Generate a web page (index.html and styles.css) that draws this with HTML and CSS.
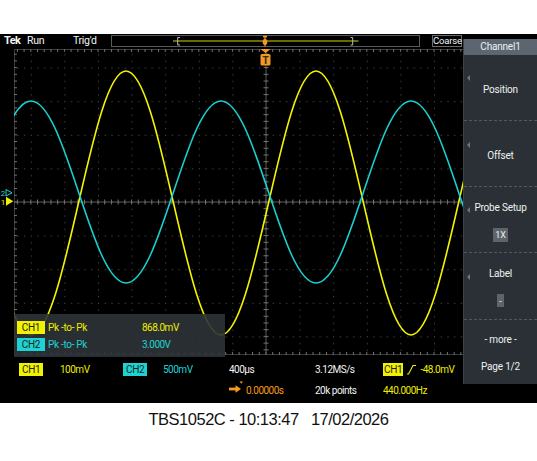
FILE: index.html
```html
<!DOCTYPE html>
<html>
<head>
<meta charset="utf-8">
<link rel="stylesheet" href="styles.css">
</head>
<body>
<div class="top-space"></div>
<div class="scope">
  <div class="topbar">
    <span class="tek">Tek</span>
    <span class="run">Run</span>
    <span class="trig">Trig'd</span>
    <svg class="recview" width="309" height="12" viewBox="0 0 309 12">
      <rect x="0.5" y="0.5" width="308" height="11" fill="none" stroke="#5a5a5a"/>
      <line x1="62" y1="6" x2="247.5" y2="6" stroke="#d6d600" stroke-width="1"/>
      <path d="M69 2.5 H66.7 V10 H69" fill="none" stroke="#b8b8b8" stroke-width="1"/>
      <path d="M239.5 2.5 H241.7 V10 H239.5" fill="none" stroke="#b8b8b8" stroke-width="1"/>
      <line x1="154" y1="0.5" x2="154" y2="11.5" stroke="#f09a25" stroke-width="1.2"/>
      <rect x="152" y="1" width="4" height="1.4" fill="#f09a25"/>
      <ellipse cx="154" cy="7" rx="2.4" ry="3" fill="#f09a25"/>
    </svg>
    <span class="coarse">Coarse</span>
  </div>

  <div class="screen">
    <svg class="markers" width="14" height="20" viewBox="0 0 14 20">
      <text x="0.8" y="8" class="mk mk2">2</text>
      <polygon points="6,1.5 12,4.8 6,8" fill="none" stroke="#1dd3d3" stroke-width="1"/>
      <text x="0.8" y="17.3" class="mk mk1">1</text>
      <polygon points="6,8.8 13.3,13.3 6,17.8" fill="#f2f200"/>
    </svg>
    <svg class="grat" width="504" height="306" viewBox="0 0 504 306">
      <defs>
        <pattern id="grid" x="16.8" y="18.6" width="33.6" height="33.6" patternUnits="userSpaceOnUse">
          <rect x="0" y="0" width="1" height="1" fill="#5c5c5c"/>
          <rect x="0" y="6.72" width="1" height="1" fill="#5c5c5c"/>
          <rect x="0" y="13.44" width="1" height="1" fill="#5c5c5c"/>
          <rect x="0" y="20.16" width="1" height="1" fill="#5c5c5c"/>
          <rect x="0" y="26.88" width="1" height="1" fill="#5c5c5c"/>
          <rect x="6.72" y="0" width="1" height="1" fill="#5c5c5c"/>
          <rect x="13.44" y="0" width="1" height="1" fill="#5c5c5c"/>
          <rect x="20.16" y="0" width="1" height="1" fill="#5c5c5c"/>
          <rect x="26.88" y="0" width="1" height="1" fill="#5c5c5c"/>
        </pattern>
        <pattern id="tickx" x="251.5" y="0" width="6.72" height="20" patternUnits="userSpaceOnUse">
          <rect x="0" y="0" width="1" height="20" fill="#727272"/>
        </pattern>
        <pattern id="ticky" x="0" y="152.5" width="20" height="6.72" patternUnits="userSpaceOnUse">
          <rect x="0" y="0" width="20" height="1" fill="#727272"/>
        </pattern>
      </defs>
      <rect width="504" height="306" fill="url(#grid)"/>
      <rect x="0" y="152.5" width="504" height="1" fill="#5a5a5a"/>
      <rect x="0" y="150.5" width="504" height="5" fill="url(#tickx)"/>
      <rect x="251.5" y="0" width="1" height="306" fill="#5a5a5a"/>
      <rect x="249.5" y="0" width="5" height="306" fill="url(#ticky)"/>
      <rect x="0" y="0" width="504" height="1" fill="#3c3c3c"/>
      <rect x="0" y="0" width="504" height="3" fill="url(#tickx)"/>
      <rect x="0" y="305" width="504" height="1" fill="#3c3c3c"/>
      <rect x="0" y="303" width="504" height="3" fill="url(#tickx)"/>
      <rect x="0" y="0" width="1" height="306" fill="#3c3c3c"/>
      <rect x="0" y="0" width="3" height="306" fill="url(#ticky)"/>
      <path class="trace-y" d="M-125.5,154
        c15.49,-67.62 30.31,-132 47.5,-132 c17.19,0 32.01,64.38 47.5,132 c15.49,67.62 30.31,132 47.5,132 c17.19,0 32.01,-64.38 47.5,-132
        c15.49,-67.62 30.31,-132 47.5,-132 c17.19,0 32.01,64.38 47.5,132 c15.49,67.62 30.31,132 47.5,132 c17.19,0 32.01,-64.38 47.5,-132
        c15.49,-67.62 30.31,-132 47.5,-132 c17.19,0 32.01,64.38 47.5,132 c15.49,67.62 30.31,132 47.5,132 c17.19,0 32.01,-64.38 47.5,-132
        c15.49,-67.62 30.31,-132 47.5,-132 c17.19,0 32.01,64.38 47.5,132 c15.49,67.62 30.31,132 47.5,132 c17.19,0 32.01,-64.38 47.5,-132"/>
      <path class="trace-c" d="M-125.5,143
        c15.49,46.62 30.31,91 47.5,91 c17.19,0 32.01,-44.38 47.5,-91 c15.49,-46.62 30.31,-91 47.5,-91 c17.19,0 32.01,44.38 47.5,91
        c15.49,46.62 30.31,91 47.5,91 c17.19,0 32.01,-44.38 47.5,-91 c15.49,-46.62 30.31,-91 47.5,-91 c17.19,0 32.01,44.38 47.5,91
        c15.49,46.62 30.31,91 47.5,91 c17.19,0 32.01,-44.38 47.5,-91 c15.49,-46.62 30.31,-91 47.5,-91 c17.19,0 32.01,44.38 47.5,91
        c15.49,46.62 30.31,91 47.5,91 c17.19,0 32.01,-44.38 47.5,-91 c15.49,-46.62 30.31,-91 47.5,-91 c17.19,0 32.01,44.38 47.5,91"/>
    </svg>
    <svg class="trigmark" width="11" height="17" viewBox="0 0 11 17">
      <polygon points="0.5,0 10.5,0 5.5,4" fill="#f09a25"/>
      <rect x="0.5" y="5" width="10" height="11.5" rx="1.5" fill="#f09a25"/>
      <text x="5.5" y="14.5" class="tmk">T</text>
    </svg>
    <div class="meas">
      <span class="badge b-yel mb">CH1</span><span class="yel">Pk -to- Pk</span><span class="yel num">868.0mV</span>
      <span class="badge b-cyan mb">CH2</span><span class="cyan">Pk -to- Pk</span><span class="cyan num">3.000V</span>
    </div>
  </div>

  <div class="status">
    <span class="c1 r1"><span class="badge b-yel">CH1</span></span>
    <span class="c2 r1 yel num">100mV</span>
    <span class="c3 r1"><span class="badge b-cyan">CH2</span></span>
    <span class="c4 r1 cyan num">500mV</span>
    <span class="c5 r1 num">400µs</span>
    <span class="c6 r1 num">3.12MS/s</span>
    <span class="c7 r1 trigset"><span class="badge b-yel tight">CH1</span><svg class="slope" width="9" height="13" viewBox="0 0 9 13"><polyline points="0,11 1.5,11 6,2.5 9,2.5" fill="none" stroke="#f2f200" stroke-width="1.1"/></svg><span class="yel num">-48.0mV</span></span>
    <span class="c5 r2 pos"><svg class="arrow" width="17" height="13" viewBox="0 0 17 13"><polygon points="10.5,-2.5 14,-2.5 12.25,-0.3" fill="#f39a1f"/><rect x="0" y="3.6" width="7" height="2.8" fill="#f39a1f"/><polygon points="6.5,1.2 12,5 6.5,8.8" fill="#f39a1f"/></svg><span class="orange num">0.00000s</span></span>
    <span class="c6 r2 num">20k points</span>
    <span class="c7 r2 yel num">440.000Hz</span>
  </div>

  <div class="menu">
    <div class="mhead">Channel1</div>
    <div class="msec s-mid arrowed">Position</div>
    <div class="msec s-mid arrowed a2">Offset</div>
    <div class="msec s-box arrowed">Probe Setup<span class="mbox">1X</span></div>
    <div class="msec s-box arrowed a2 s-tall">Label<span class="mbox small">-</span></div>
    <div class="msec s-last">- more -<span class="page">Page 1/2</span></div>
  </div>
</div>
<div class="caption">TBS1052C - 10:13:47&nbsp;&nbsp;&nbsp;17/02/2026</div>
</body>
</html>
```

FILE: styles.css
```css
* { box-sizing: border-box; }
html, body { margin: 0; padding: 0; background: #ffffff; }
body {
  width: 537px;
  height: 461px;
  overflow: hidden;
  font-family: Roboto, "Liberation Sans", sans-serif;
}
.top-space { height: 34px; }

.scope {
  position: relative;
  height: 369px;
  background: #000;
  padding-top: 1px;
  display: flex;
  flex-direction: column;
  color: #f4f4f4;
  font-size: 10px;
  letter-spacing: -0.3px;
}

/* top bar */
.topbar {
  display: flex;
  align-items: center;
  height: 12px;
  font-size: 10.5px;
  line-height: 12px;
  white-space: nowrap;
}
.tek { width: 27px; padding-left: 4px; font-weight: 700; font-size: 11px; letter-spacing: -0.6px; }
.run { width: 46px; }
.trig { width: 38px; }
.recview { display: block; flex: none; }
.coarse {
  margin-left: 12px;
  width: 30px;
  height: 12px;
  border: 1px solid #6a6a6a;
  font-size: 9.5px;
  line-height: 10px;
  text-align: center;
  letter-spacing: -0.2px;
}

/* screen / graticule */
.screen {
  position: relative;
  height: 306px;
  margin-top: 2px;
  padding-left: 14px;
}
.grat { display: block; }
.trace-y { fill: none; stroke: #f4f400; stroke-width: 1.6; }
.trace-c { fill: none; stroke: #19d0d0; stroke-width: 1.6; }
.markers { position: absolute; left: 0; top: 139px; overflow: visible; }
.mk { font-family: Roboto, sans-serif; font-size: 8px; }
.mk1 { fill: #f2f200; }
.mk2 { fill: #1dd3d3; }
.trigmark { position: absolute; left: 260px; top: 0; }
.tmk { font-family: Roboto, sans-serif; font-weight: 700; font-size: 10px; fill: #3a2400; text-anchor: middle; }

/* measurement box */
.meas {
  position: absolute;
  left: 14px;
  top: 265px;
  width: 211px;
  height: 43px;
  background: rgba(46, 51, 55, 0.9);
  padding: 7px 0 0 3px;
  display: grid;
  grid-template-columns: 31px 94px auto;
  grid-template-rows: 13px 13px;
  row-gap: 4px;
  align-items: center;
  line-height: 13px;
}
.badge {
  display: inline-block;
  height: 13px;
  line-height: 13px;
  padding: 0 3px;
  color: #222;
}
.badge.mb { width: 28px; text-align: center; padding: 0; }
.badge.tight { padding: 0 1px; }
.b-yel { background: #f2f200; }
.b-cyan { background: #1dd2d2; }
.yel { color: #eeee00; }
.cyan { color: #1dd3d3; }
.orange { color: #f39a1f; }
.num { letter-spacing: -0.5px; }

/* status rows */
.status {
  margin-top: 8px;
  padding-left: 19px;
  display: grid;
  grid-template-columns: 41px 63px 40px 66px 86px 68px auto;
  grid-template-rows: 13px 13px;
  row-gap: 8px;
  align-items: center;
  line-height: 13px;
  white-space: nowrap;
}
.r1 { grid-row: 1; }
.r2 { grid-row: 2; }
.c1 { grid-column: 1; }
.c2 { grid-column: 2; }
.c3 { grid-column: 3; }
.c4 { grid-column: 4; }
.c5 { grid-column: 5; }
.c6 { grid-column: 6; }
.c7 { grid-column: 7; }
.c1, .c3 { display: flex; }
.trigset { display: flex; align-items: center; }
.slope { display: block; margin: 0 4px; }
.pos { display: flex; align-items: center; }
.arrow { display: block; overflow: visible; }

/* side menu */
.menu {
  position: absolute;
  left: 463px;
  top: 5px;
  width: 74px;
  height: 345px;
  background: #2a3035;
  border-left: 1px solid #3b434a;
  display: flex;
  flex-direction: column;
  color: #eef0f1;
  font-size: 10px;
  letter-spacing: -0.2px;
  line-height: 13px;
}
.mhead {
  height: 16px;
  line-height: 16px;
  background: #5b6670;
  text-align: center;
  font-size: 10px;
}
.msec {
  position: relative;
  height: 66px;
  border-bottom: 1px dashed #4f585f;
  display: flex;
  flex-direction: column;
  align-items: center;
  text-align: center;
}
.s-mid { padding-top: 28px; }
.s-box { padding-top: 14px; }
.s-tall { height: 67px; }
.s-last { padding-top: 13px; border-bottom: none; height: auto; flex: 1; }
.arrowed::before {
  content: "";
  position: absolute;
  left: 3px;
  top: 20px;
  border-right: 3px solid #6d767d;
  border-top: 3px solid transparent;
  border-bottom: 3px solid transparent;
}
.arrowed.a2::before { top: 21px; }
.mbox {
  margin-top: 14px;
  height: 14px;
  line-height: 14px;
  padding: 0 2px;
  background: #5d646a;
  font-size: 9px;
}
.mbox.small { width: 7px; height: 13px; padding: 0; }
.page { margin-top: 14px; }

/* caption */
.caption {
  margin-top: 7px;
  text-align: center;
  font-family: "Liberation Sans", Arial, sans-serif;
  font-size: 16.5px;
  line-height: 19px;
  letter-spacing: -0.5px;
  color: #111;
}
```
